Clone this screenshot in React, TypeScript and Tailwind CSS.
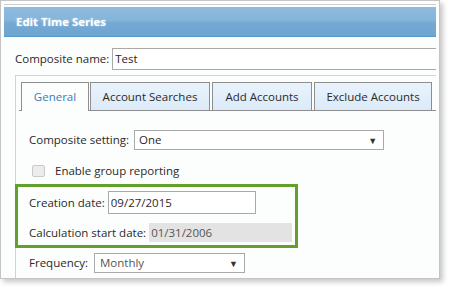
import React from "react";

const font = { fontFamily: '"Open Sans", "Noto Sans", sans-serif' };

function Arrow() {
  return <span className="text-[9px] leading-none text-[#333]">▼</span>;
}

export default function App() {
  return (
    <div className="w-[449px] h-[288px] bg-white whitespace-nowrap" style={font}>
      <div className="w-[440px] h-[279px] border border-[#c4c4c4] bg-[#fcfdfd] shadow-[3px_3px_5px_rgba(0,0,0,0.22)] pt-[3px] px-[3px] flex flex-col">
        <div className="border-t border-[#cfcfcf] pt-[2px]">
          <div className="h-[30px] border-b border-[#5a98cc] bg-[linear-gradient(to_bottom,#8dbade_0%,#86b5da_45%,#74a9d3_55%,#6ea5d1_100%)] flex items-center pl-[12px]">
            <span className="text-white font-bold text-[11.4px] leading-none [text-shadow:0_0_2px_rgba(255,255,255,0.5)]">Edit Time Series</span>
          </div>
        </div>
        <div className="flex-1 overflow-hidden pl-[11px] text-[11.5px] text-[#2a2a2a] flex flex-col">
          <div className="mt-[11px] flex items-center h-[22px]">
            <span>Composite name:</span>
            <div className="ml-[3px] flex-1 h-[22px] border border-r-0 border-[#a9a9a9] bg-white flex items-center pl-[2px] text-[#2a2333]">Test</div>
          </div>
          <div className="mt-[5px] flex-1 border-l border-t border-[#d2d2d2] flex flex-col">
            <div className="mt-[6px] ml-[3px] flex items-end border-b border-[#8e8e8e] h-[29px]">
              <div className="ml-[2px] w-[68px] h-[29px] -mb-px border border-b-0 border-[#8e8e8e] bg-[#fcfdfd] flex items-center justify-center text-[#3a7cb8]">General</div>
              <div className="ml-[1px] w-[120px] h-[28px] border border-b-0 border-[#8e8e8e] bg-[linear-gradient(to_bottom,#e9f3fc,#dceaf8)] flex items-center justify-center">Account Searches</div>
              <div className="ml-[2px] w-[100px] h-[28px] border border-b-0 border-[#8e8e8e] bg-[linear-gradient(to_bottom,#e9f3fc,#dceaf8)] flex items-center justify-center">Add Accounts</div>
              <div className="ml-[2px] w-[118px] h-[28px] border border-b-0 border-[#8e8e8e] bg-[linear-gradient(to_bottom,#e9f3fc,#dceaf8)] flex items-center justify-center">Exclude Accounts</div>
            </div>
            <div className="pl-[13px] flex flex-col">
              <div className="mt-[19px] flex items-center h-[20px]">
                <span>Composite setting:</span>
                <div className="ml-[5px] w-[250px] h-[20px] border border-[#a9a9a9] bg-white flex items-center justify-between pl-[4px] pr-[6px]">
                  <span>One</span>
                  <Arrow />
                </div>
              </div>
              <div className="mt-[14px] flex items-center h-[13px]">
                <div className="ml-[3px] w-[13px] h-[12px] rounded-[2px] border border-[#cacaca] bg-[#ececec]" />
                <span className="ml-[10px]">Enable group reporting</span>
              </div>
              <div className="mt-[7px] -ml-[14px] w-[283px] h-[64px] border-[3px] border-[#63a02b] pl-[11px] flex flex-col">
                <div className="mt-[4px] flex items-center h-[23px]">
                  <span>Creation date:</span>
                  <div className="ml-[3px] w-[148px] h-[23px] border border-[#a9a9a9] bg-white flex items-center pl-[2px]">09/27/2015</div>
                </div>
                <div className="mt-[9px] flex items-center h-[19px]">
                  <span>Calculation start date:</span>
                  <div className="ml-[3px] w-[143px] h-[19px] bg-[#e3e3e3] flex items-center pl-[2px] text-[#555]">01/31/2006</div>
                </div>
              </div>
              <div className="mt-[5px] flex items-center h-[20px]">
                <span>Frequency:</span>
                <div className="ml-[6px] w-[151px] h-[20px] border border-[#a9a9a9] bg-white flex items-center justify-between pl-[5px] pr-[6px] text-[#555]">
                  <span>Monthly</span>
                  <Arrow />
                </div>
              </div>
            </div>
          </div>
        </div>
      </div>
    </div>
  );
}
